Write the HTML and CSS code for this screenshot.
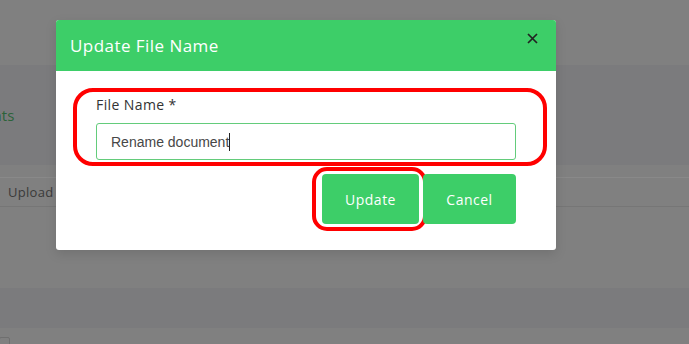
FILE: index.html
```html
<!DOCTYPE html>
<html>
<head>
<meta charset="utf-8">
<link rel="stylesheet" href="styles.css">
</head>
<body>
<div class="page">
  <div class="topbar"></div>
  <div class="band band-docs"><span class="docs-title">Documents</span></div>
  <div class="section">
    <div class="upload-row"><span class="upload-btn">Upload</span></div>
  </div>
  <div class="band band-foot"></div>
  <div class="rest"><span class="check"></span></div>
</div>

<div class="modal">
  <div class="modal-header">
    <h2 class="modal-title">Update File Name</h2>
    <button class="close" aria-label="Close">
      <svg width="11" height="11" viewBox="0 0 11 11"><path d="M1 1 L10 10 M10 1 L1 10" stroke="#222" stroke-width="1.7" fill="none"/></svg>
    </button>
  </div>
  <div class="modal-body">
    <div class="form-group highlight">
      <label class="label">File Name *</label>
      <div class="input"><span class="input-text">Rename document</span><span class="caret"></span></div>
    </div>
    <div class="actions">
      <button class="btn highlight-btn">Update</button>
      <button class="btn">Cancel</button>
    </div>
  </div>
</div>
</body>
</html>
```
FILE: styles.css
```css
html, body {
  margin: 0;
  padding: 0;
  height: 100%;
  overflow: hidden;
}
body {
  background: #808080;
  font-family: "Open Sans", "Liberation Sans", sans-serif;
}
.page {
  display: flex;
  flex-direction: column;
  height: 344px;
}
.topbar {
  height: 65px;
  flex: none;
  background: #808080;
}
.band {
  background: #7b7b7d;
  flex: none;
}
.band-docs {
  height: 100px;
}
.docs-title {
  display: block;
  margin-top: 40px;
  margin-left: -66px;
  font-size: 15px;
  color: #2c6339;
  line-height: 20px;
}
.section {
  height: 123px;
  flex: none;
  background: #808080;
}
.upload-row {
  margin-top: 12px;
  height: 28px;
  border-top: 1px solid #898989;
  border-bottom: 1px solid #767676;
  display: flex;
  align-items: center;
}
.upload-btn {
  margin-left: 8px;
  font-size: 13px;
  color: #3a3a3a;
  padding-right: 6px;
  letter-spacing: 0.3px;
}
.band-foot {
  height: 40px;
}
.rest {
  flex: 1;
  background: #808080;
}
.check {
  display: block;
  margin-top: 9px;
  margin-left: -1px;
  width: 9px;
  height: 12px;
  border: 1px solid #6f6f6f;
  border-radius: 2px;
}

.modal {
  position: absolute;
  left: 56px;
  top: 20px;
  width: 500px;
  background: #fff;
  border-radius: 3px;
  box-shadow: 0 4px 12px rgba(0,0,0,0.12);
}
.modal-header {
  height: 51px;
  background: #3dce68;
  border-radius: 3px 3px 0 0;
  display: flex;
  align-items: center;
  justify-content: space-between;
  padding: 0 18px 0 14px;
}
.modal-title {
  margin: 0;
  font-size: 17px;
  font-weight: 500;
  color: #fff;
  letter-spacing: 0.45px;
}
.close {
  align-self: flex-start;
  margin-top: 13px;
  border: 0;
  padding: 0;
  background: none;
  width: 11px;
  height: 11px;
  display: block;
}
.close svg { display: block; }
.modal-body {
  padding: 24px 40px 26px 40px;
}
.form-group {
  position: relative;
  display: flex;
  flex-direction: column;
}
.highlight::after {
  content: "";
  position: absolute;
  top: -7px;
  left: -23px;
  right: -31px;
  bottom: -6px;
  border: 4px solid #ff0000;
  border-radius: 20px;
}
.label {
  font-size: 14px;
  line-height: 20px;
  font-weight: 500;
  color: #333;
  margin-bottom: 8px;
  letter-spacing: 0.4px;
}
.input {
  height: 35px;
  border: 1px solid #63cc7b;
  border-radius: 3px;
  display: flex;
  align-items: center;
  padding-left: 14px;
}
.input-text {
  font-family: "Liberation Sans", Arial, sans-serif;
  font-size: 14px;
  color: #474747;
}
.caret {
  display: inline-block;
  width: 1px;
  height: 18px;
  background: #222;
}
.actions {
  display: flex;
  justify-content: flex-end;
  gap: 4px;
  margin-top: 14px;
}
.btn {
  height: 50px;
  padding: 0;
  border: 0;
  border-radius: 4px;
  background: #3dce68;
  color: #fff;
  font-family: "Open Sans", "Liberation Sans", sans-serif;
  font-size: 14px;
  letter-spacing: 0.5px;
  position: relative;
}
.highlight-btn {
  width: 97px;
}
.highlight-btn::after {
  content: "";
  position: absolute;
  top: -7px;
  left: -10px;
  right: -8px;
  bottom: -7px;
  border: 4px solid #ff0000;
  border-radius: 15px;
}
.actions .btn:last-child {
  width: 93px;
}
```
